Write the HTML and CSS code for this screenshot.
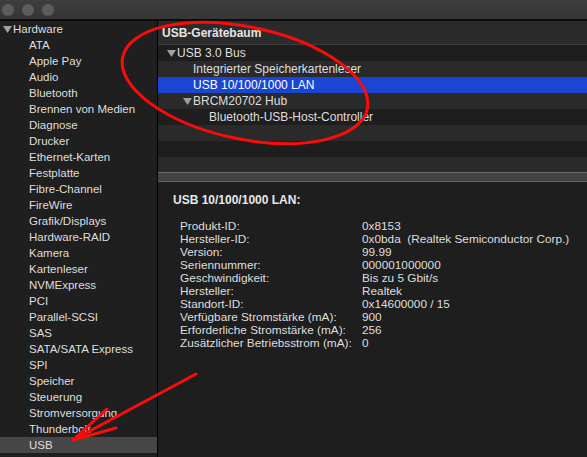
FILE: index.html
```html
<!DOCTYPE html>
<html lang="de">
<head>
<meta charset="utf-8">
<title>Systeminformationen</title>
<link rel="stylesheet" href="styles.css">
</head>
<body>
<div class="window">
  <div class="titlebar">
    <span class="light"></span><span class="light"></span><span class="light"></span>
  </div>
  <div class="main">
    <aside class="sidebar">
      <div class="row group"><svg class="tri" viewBox="0 0 9 7"><polygon points="0,0 9,0 4.5,7"/></svg>Hardware</div>
      <div class="row item">ATA</div>
      <div class="row item">Apple Pay</div>
      <div class="row item">Audio</div>
      <div class="row item">Bluetooth</div>
      <div class="row item">Brennen von Medien</div>
      <div class="row item">Diagnose</div>
      <div class="row item">Drucker</div>
      <div class="row item">Ethernet-Karten</div>
      <div class="row item">Festplatte</div>
      <div class="row item">Fibre-Channel</div>
      <div class="row item">FireWire</div>
      <div class="row item">Grafik/Displays</div>
      <div class="row item">Hardware-RAID</div>
      <div class="row item">Kamera</div>
      <div class="row item">Kartenleser</div>
      <div class="row item">NVMExpress</div>
      <div class="row item">PCI</div>
      <div class="row item">Parallel-SCSI</div>
      <div class="row item">SAS</div>
      <div class="row item">SATA/SATA Express</div>
      <div class="row item">SPI</div>
      <div class="row item">Speicher</div>
      <div class="row item">Steuerung</div>
      <div class="row item">Stromversorgung</div>
      <div class="row item">Thunderbolt</div>
      <div class="row item selected">USB</div>
    </aside>
    <section class="content">
      <div class="tree-header">USB-Gerätebaum</div>
      <div class="tree">
        <div class="trow lv0"><svg class="ttri" viewBox="0 0 9 7"><polygon points="0,0 9,0 4.5,7"/></svg>USB 3.0 Bus</div>
        <div class="trow lv1">Integrierter Speicherkartenleser</div>
        <div class="trow lv1 active">USB 10/100/1000 LAN</div>
        <div class="trow lv1t"><svg class="ttri" viewBox="0 0 9 7"><polygon points="0,0 9,0 4.5,7"/></svg>BRCM20702 Hub</div>
        <div class="trow lv2">Bluetooth-USB-Host-Controller</div>
        <div class="trow"></div>
        <div class="trow"></div>
        <div class="trow"></div>
      </div>
      <div class="splitter"></div>
      <div class="detail">
        <div class="detail-title">USB 10/100/1000 LAN:</div>
        <dl class="props">
          <dt>Produkt-ID:</dt><dd>0x8153</dd>
          <dt>Hersteller-ID:</dt><dd>0x0bda&nbsp; (Realtek Semiconductor Corp.)</dd>
          <dt>Version:</dt><dd>99.99</dd>
          <dt>Seriennummer:</dt><dd>000001000000</dd>
          <dt>Geschwindigkeit:</dt><dd>Bis zu 5 Gbit/s</dd>
          <dt>Hersteller:</dt><dd>Realtek</dd>
          <dt>Standort-ID:</dt><dd>0x14600000 / 15</dd>
          <dt>Verfügbare Stromstärke (mA):</dt><dd>900</dd>
          <dt>Erforderliche Stromstärke (mA):</dt><dd>256</dd>
          <dt>Zusätzlicher Betriebsstrom (mA):</dt><dd>0</dd>
        </dl>
      </div>
    </section>
  </div>
  <svg class="annot" viewBox="0 0 587 457" width="587" height="457">
    <ellipse cx="245" cy="83" rx="125" ry="56" transform="rotate(12 245 83)"/>
    <line x1="196" y1="374" x2="73" y2="440"/>
    <line x1="107" y1="409" x2="73" y2="440"/>
    <line x1="116" y1="428" x2="73" y2="440"/>
  </svg>
</div>
</body>
</html>
```
FILE: styles.css
```css
* { box-sizing: border-box; }
html, body {
  margin: 0;
  padding: 0;
  background: #1e1e1e;
}
body {
  width: 587px;
  height: 457px;
  overflow: hidden;
  font-family: "Liberation Sans", Arial, sans-serif;
  color: #dedede;
}
.window {
  position: relative;
  width: 587px;
  height: 457px;
  display: flex;
  flex-direction: column;
  overflow: hidden;
}
.titlebar {
  height: 21px;
  flex: none;
  background: linear-gradient(#3e3e3e, #363636);
  border-bottom: 2px solid #0c0c0c;
  display: flex;
  align-items: center;
  gap: 8px;
  padding: 0 0 0 2px;
}
.light {
  width: 12px;
  height: 12px;
  border-radius: 50%;
  background: #5c5c5c;
  margin-top: 1px;
}
.main {
  flex: 1;
  display: flex;
  min-height: 0;
}
.sidebar {
  width: 158px;
  flex: none;
  background: #1f1f1f;
  border-right: 1px solid #000;
  overflow: hidden;
  font-size: 11.5px;
}
.row {
  height: 16px;
  line-height: 16px;
  white-space: nowrap;
  display: flex;
  align-items: center;
}
.row.group { padding-left: 3px; }
.row.item { padding-left: 29px; }
.row.selected { background: #474747; }
.tri {
  width: 9px;
  height: 7px;
  fill: #a0a0a0;
  margin-right: 1px;
  flex: none;
}
.content {
  flex: 1;
  display: flex;
  flex-direction: column;
  min-width: 0;
  background: #1e1e1e;
}
.tree-header {
  height: 24px;
  flex: none;
  background: #2b2b2b;
  border-bottom: 1px solid #3d3d3d;
  padding-left: 4px;
  font-weight: bold;
  font-size: 12px;
  line-height: 24px;
  color: #e4e4e4;
}
.tree {
  height: 127px;
  flex: none;
  overflow: hidden;
  font-size: 12px;
}
.trow {
  height: 16px;
  line-height: 16px;
  display: flex;
  align-items: center;
  white-space: nowrap;
  background: #1e1e1e;
}
.trow:nth-child(even) { background: #2a2a2a; }
.trow.active { background: #1b46d4; color: #fff; }
.lv0 { padding-left: 9px; }
.lv1 { padding-left: 35px; }
.lv1t { padding-left: 25px; }
.lv2 { padding-left: 51px; }
.ttri {
  width: 9px;
  height: 7px;
  fill: #a0a0a0;
  margin-right: 1px;
  flex: none;
}
.splitter {
  height: 10px;
  flex: none;
  background: #424242;
  border-top: 1px solid #6a6a6a;
  border-bottom: 1px solid #606060;
}
.detail {
  flex: 1;
  padding: 10px 0 0 15px;
  font-size: 11.8px;
}
.detail-title {
  font-weight: bold;
  font-size: 12px;
  line-height: 16px;
  margin-bottom: 12px;
  color: #e8e8e8;
}
.props {
  margin: 0 0 0 7px;
  display: grid;
  grid-template-columns: 182px auto;
  line-height: 13px;
}
.props dt, .props dd {
  margin: 0;
  white-space: nowrap;
}
.annot {
  position: absolute;
  left: 0;
  top: 0;
  pointer-events: none;
  fill: none;
  stroke: #ff0a0a;
  stroke-width: 3;
  stroke-linecap: round;
}
```
